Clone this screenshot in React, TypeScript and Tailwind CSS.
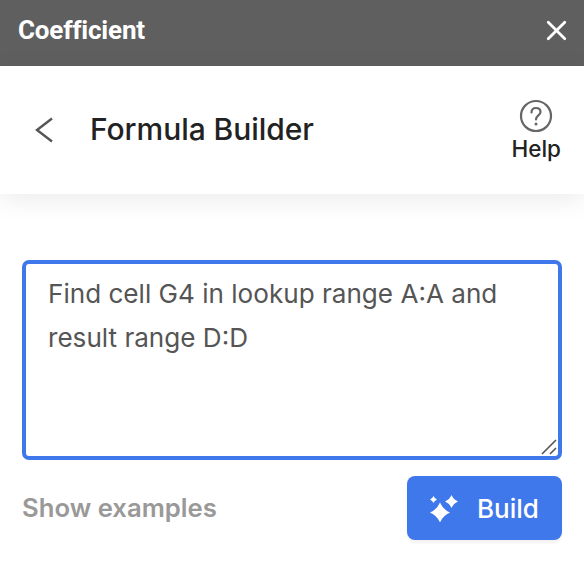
import { X } from "lucide-react";

function Star({ cx, cy, r }: { cx: number; cy: number; r: number }) {
  const k = r * 0.3;
  return (
    <path
      d={`M${cx} ${cy - r} Q${cx + k} ${cy - k} ${cx + r} ${cy} Q${cx + k} ${cy + k} ${cx} ${cy + r} Q${cx - k} ${cy + k} ${cx - r} ${cy} Q${cx - k} ${cy - k} ${cx} ${cy - r} Z`}
    />
  );
}

function Sparkles() {
  return (
    <svg width="28" height="27" viewBox="0 0 28 27" fill="white">
      <Star cx={10} cy={17.5} r={10} />
      <Star cx={21.5} cy={6.500} r={6.500} />
      <Star cx={3.500} cy={4.500} r={3.500} />
    </svg>
  );
}

export default function App() {
  return (
    <div className="h-[562px] w-[584px] overflow-hidden bg-white font-['Inter',sans-serif]">
      <div className="flex h-[66px] items-center justify-between bg-[#5f5f5f] pb-[6px] pl-[18px] pr-[11px]">
        <span className="font-['Roboto',sans-serif] text-[26px] font-bold tracking-[-0.2px] text-white">
          Coefficient
        </span>
        <X size={33} strokeWidth={2} className="text-white" />
      </div>

      <div className="flex h-[128px] items-center justify-between bg-white pl-[35px] pr-[23px] shadow-[0_6px_24px_rgba(0,0,0,0.08)]">
        <div className="flex items-center gap-[37px]">
          <svg width="18" height="26" viewBox="0 0 18 26" fill="none" stroke="#555555" strokeWidth="2.400">
            <path d="M17 1.500 L2 13 L17 24.500" />
          </svg>
          <h1 className="pb-[2px] text-[30px] font-medium tracking-[-0.05px] text-[#222222]">Formula Builder</h1>
        </div>
        <div className="flex flex-col items-center gap-[3px]">
          <svg width="34" height="34" viewBox="0 0 34 34" fill="none" stroke="#666666" strokeWidth="2.200">
            <circle cx="17" cy="17" r="15" />
            <path d="M12.500 13.500 C12.500 10.500 14.500 9 17 9 C19.500 9 21.500 10.500 21.500 13 C21.500 16.500 17 16.500 17 20.500" strokeLinecap="round" />
            <circle cx="17" cy="25" r="1.500" fill="#666666" stroke="none" />
          </svg>
          <span className="text-[22.5px] font-medium leading-[26px] text-[#222222]">Help</span>
        </div>
      </div>

      <div className="px-[22px] pt-[66px]">
        <div className="relative">
          <textarea
            readOnly
            value="Find cell G4 in lookup range A:A and result range D:D"
            className="block h-[200px] w-[540px] resize-none rounded-[7px] border-[4px] border-[#3f78ea] bg-white px-[22px] pt-[8px] text-[26.1px] leading-[44px] text-[#555555] outline-none"
          />
          <svg width="16" height="16" viewBox="0 0 16 16" stroke="#555555" strokeWidth="1.600" className="absolute bottom-[5px] right-[5px]">
            <path d="M1 15 L15 1 M9 15 L15 9" />
          </svg>
        </div>
        <div className="mt-[16px] flex items-center justify-between">
          <span className="text-[25.7px] font-semibold text-[#999999]">Show examples</span>
          <button className="flex h-[64px] w-[155px] items-center justify-center gap-[19px] rounded-[8px] bg-[#3f78ea] text-[26px] font-medium text-white shadow-[0_3px_3px_rgba(0,0,0,0.05)]">
            <Sparkles />
            Build
          </button>
        </div>
      </div>
    </div>
  );
}
